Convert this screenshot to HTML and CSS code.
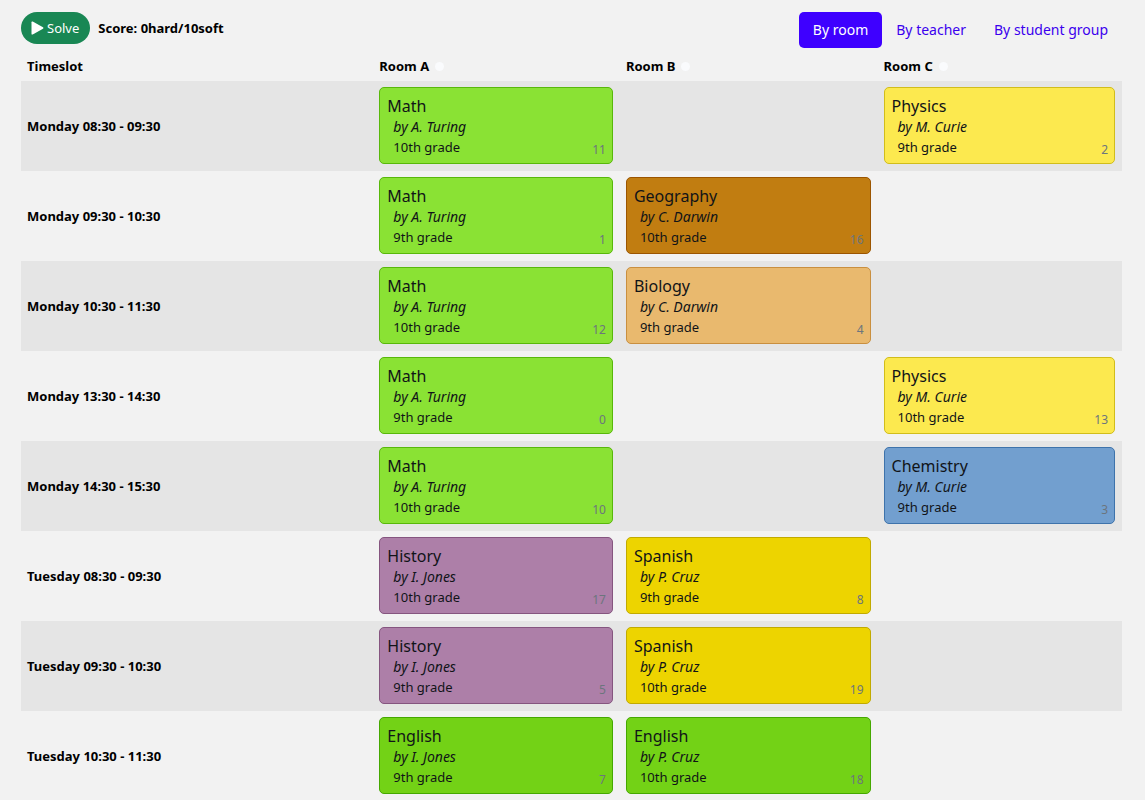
FILE: index.html
```html
<!DOCTYPE html>
<html lang="en">
<head>
<meta charset="utf-8">
<meta name="viewport" content="width=device-width, initial-scale=1">
<title>School timetabling</title>
<link rel="stylesheet" href="styles.css">
</head>
<body>
<main class="page">
  <header class="toolbar">
    <button class="solve" type="button"><svg class="play" viewBox="0 0 13 14" aria-hidden="true"><path d="M0.5 1.3Q0.5 0 1.7 0.6L12 6.2Q13 7 12 7.8L1.7 13.4Q0.5 14 0.5 12.7Z"/></svg>Solve</button>
    <span class="score">Score: 0hard/10soft</span>
    <nav class="views" aria-label="Timetable view">
      <a class="view active" href="#room">By room</a>
      <a class="view" href="#teacher">By teacher</a>
      <a class="view" href="#group">By student group</a>
    </nav>
  </header>
  <table class="timetable">
    <colgroup><col class="col-slot"><col class="col-a"><col class="col-b"><col class="col-c"></colgroup>
    <thead>
      <tr>
        <th scope="col">Timeslot</th>
        <th scope="col">Room A<button class="remove" type="button" aria-label="Delete Room A"></button></th>
        <th scope="col">Room B<button class="remove" type="button" aria-label="Delete Room B"></button></th>
        <th scope="col">Room C<button class="remove" type="button" aria-label="Delete Room C"></button></th>
      </tr>
    </thead>
    <tbody>
      <tr>
        <th scope="row">Monday 08:30 - 09:30</th>
        <td><article class="card math"><h2>Math</h2><p><em>by A. Turing</em></p><p>10th grade</p><small>11</small></article></td>
        <td></td>
        <td><article class="card physics"><h2>Physics</h2><p><em>by M. Curie</em></p><p>9th grade</p><small>2</small></article></td>
      </tr>
      <tr>
        <th scope="row">Monday 09:30 - 10:30</th>
        <td><article class="card math"><h2>Math</h2><p><em>by A. Turing</em></p><p>9th grade</p><small>1</small></article></td>
        <td><article class="card geography"><h2>Geography</h2><p><em>by C. Darwin</em></p><p>10th grade</p><small>16</small></article></td>
        <td></td>
      </tr>
      <tr>
        <th scope="row">Monday 10:30 - 11:30</th>
        <td><article class="card math"><h2>Math</h2><p><em>by A. Turing</em></p><p>10th grade</p><small>12</small></article></td>
        <td><article class="card biology"><h2>Biology</h2><p><em>by C. Darwin</em></p><p>9th grade</p><small>4</small></article></td>
        <td></td>
      </tr>
      <tr>
        <th scope="row">Monday 13:30 - 14:30</th>
        <td><article class="card math"><h2>Math</h2><p><em>by A. Turing</em></p><p>9th grade</p><small>0</small></article></td>
        <td></td>
        <td><article class="card physics"><h2>Physics</h2><p><em>by M. Curie</em></p><p>10th grade</p><small>13</small></article></td>
      </tr>
      <tr>
        <th scope="row">Monday 14:30 - 15:30</th>
        <td><article class="card math"><h2>Math</h2><p><em>by A. Turing</em></p><p>10th grade</p><small>10</small></article></td>
        <td></td>
        <td><article class="card chemistry"><h2>Chemistry</h2><p><em>by M. Curie</em></p><p>9th grade</p><small>3</small></article></td>
      </tr>
      <tr>
        <th scope="row">Tuesday 08:30 - 09:30</th>
        <td><article class="card history"><h2>History</h2><p><em>by I. Jones</em></p><p>10th grade</p><small>17</small></article></td>
        <td><article class="card spanish"><h2>Spanish</h2><p><em>by P. Cruz</em></p><p>9th grade</p><small>8</small></article></td>
        <td></td>
      </tr>
      <tr>
        <th scope="row">Tuesday 09:30 - 10:30</th>
        <td><article class="card history"><h2>History</h2><p><em>by I. Jones</em></p><p>9th grade</p><small>5</small></article></td>
        <td><article class="card spanish"><h2>Spanish</h2><p><em>by P. Cruz</em></p><p>10th grade</p><small>19</small></article></td>
        <td></td>
      </tr>
      <tr>
        <th scope="row">Tuesday 10:30 - 11:30</th>
        <td><article class="card english"><h2>English</h2><p><em>by I. Jones</em></p><p>9th grade</p><small>7</small></article></td>
        <td><article class="card english"><h2>English</h2><p><em>by P. Cruz</em></p><p>10th grade</p><small>18</small></article></td>
        <td></td>
      </tr>
    </tbody>
  </table>
</main>
</body>
</html>
```
FILE: styles.css
```css
* {
  box-sizing: border-box;
}

body {
  margin: 0;
  background: #f2f2f2;
  color: #111418;
  font: 13px/20px "Noto Sans", "Open Sans", sans-serif;
}

.page {
  padding: 12px 23px 0 21px;
}

.toolbar {
  display: flex;
  align-items: flex-start;
  height: 40px;
}

.solve {
  display: flex;
  align-items: center;
  gap: 3px;
  height: 32px;
  padding: 0 11px 0 10px;
  border: 0;
  border-radius: 16px;
  background: #198754;
  color: #fff;
  font: inherit;
}

.play {
  width: 13px;
  height: 14px;
  fill: currentColor;
}

.score {
  margin-left: 8px;
  color: #000;
  line-height: 32px;
  font-weight: 700;
}

.views {
  display: flex;
  margin-left: auto;
}

.view {
  padding: 0 14px;
  border-radius: 5px;
  color: #3b00ee;
  font-size: 14px;
  line-height: 36px;
  text-decoration: none;
}

.view.active {
  background: #3e00ff;
  color: #fff;
}

.timetable {
  width: 100%;
  border-collapse: collapse;
  table-layout: fixed;
}

.col-slot {
  width: 32%;
}

.col-a {
  width: 22.4%;
}

.col-b {
  width: 23.4%;
}

.col-c {
  width: 22.2%;
}

th,
td {
  padding: 6px 7px 7px 6px;
  text-align: left;
}

th {
  color: #000;
}

thead th {
  padding: 4px 6px 5px;
}

tbody tr:nth-child(odd) {
  background: #e5e5e5;
}

.remove {
  width: 9px;
  height: 9px;
  margin-left: 6px;
  padding: 0;
  border: 0;
  border-radius: 50%;
  background: #fafbfd;
}

.card {
  position: relative;
  padding: 7px 7px 6px;
  border: 1px solid;
  border-radius: 5px;
}

.card h2 {
  margin: 0;
  font-size: 16px;
  font-weight: 400;
  line-height: 22px;
}

.card p {
  height: 20px;
  margin: 0 0 0 6px;
}

.card em {
  font-size: 14px;
}

.card small {
  position: absolute;
  right: 6px;
  bottom: 3px;
  color: #6c757d;
  font-size: 12px;
}

.math {
  background: #8ae234;
  border-color: #58b80a;
}

.physics {
  background: #fce94f;
  border-color: #d1bd1b;
}

.geography {
  background: #c17d11;
  border-color: #9b5500;
}

.biology {
  background: #e9b96e;
  border-color: #c98f3f;
}

.chemistry {
  background: #729fcf;
  border-color: #3e73ab;
}

.history {
  background: #ad7fa8;
  border-color: #85557f;
}

.spanish {
  background: #edd400;
  border-color: #c1aa00;
}

.english {
  background: #73d216;
  border-color: #45a800;
}
```
